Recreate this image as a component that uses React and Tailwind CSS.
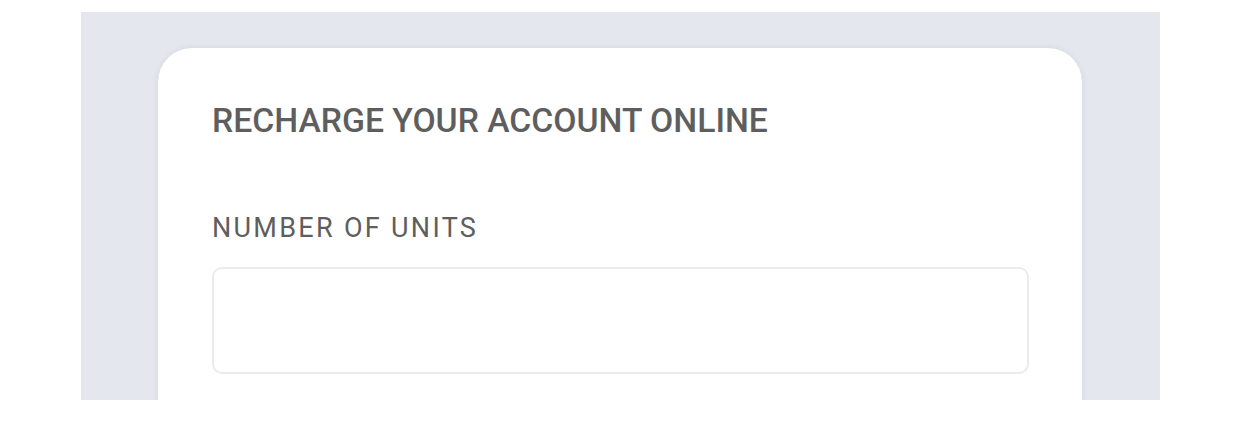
export default function App() {
  return (
    <div className="w-[1242px] h-[431px] bg-white pt-[12px] pl-[81px]" style={{ fontFamily: 'Roboto, "Noto Sans", sans-serif' }}>
      <div className="w-[1079px] h-[388px] bg-[#e4e7ee] pt-[36px] pl-[77px] overflow-hidden">
        <div className="w-[924px] h-[420px] bg-white rounded-t-[34px] shadow-[0_0_6px_rgba(0,0,0,0.08)] pt-[53px] px-[54px]">
          <h1 className="text-[33.7px] leading-[40px] text-[#5e5e5e] font-medium tracking-[0px]">RECHARGE YOUR ACCOUNT ONLINE</h1>
          <div className="mt-[72px] text-[27px] leading-[30px] text-[#5e5e5e] font-normal tracking-[2.3px]">NUMBER OF UNITS</div>
          <div className="mt-[24px] w-[817px] h-[107px] border-2 border-[#ebebeb] rounded-[10px]"></div>
        </div>
      </div>
    </div>
  );
}
